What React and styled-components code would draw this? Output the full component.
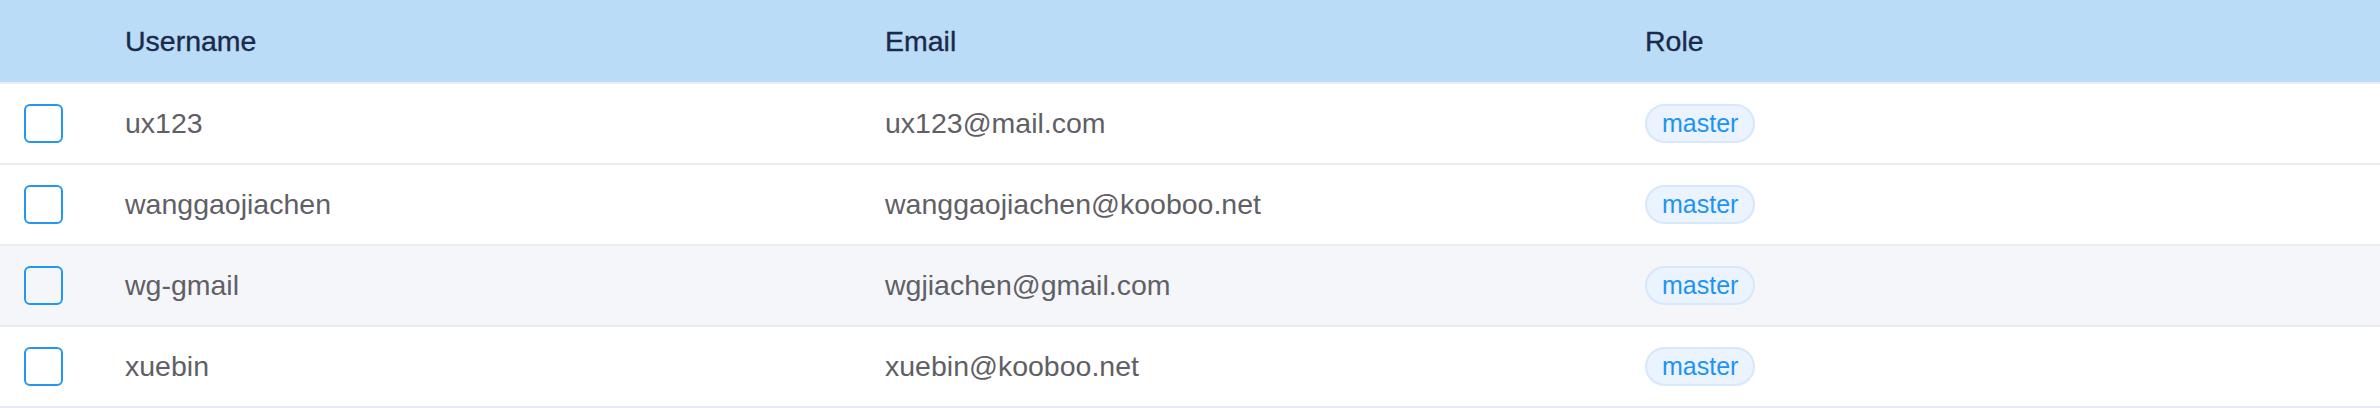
import React, { useState } from 'react';
import styled, { createGlobalStyle } from 'styled-components';

const users = [
  { name: 'ux123', email: 'ux123@mail.com', role: 'master' },
  { name: 'wanggaojiachen', email: 'wanggaojiachen@kooboo.net', role: 'master' },
  { name: 'wg-gmail', email: 'wgjiachen@gmail.com', role: 'master' },
  { name: 'xuebin', email: 'xuebin@kooboo.net', role: 'master' },
];

const GlobalStyle = createGlobalStyle`
  body {
    margin: 0;
    background: #fff;
    font-family: "Liberation Sans", Arial, sans-serif;
  }
`;

const Table = styled.div`
  width: 100%;
`;

const Row = styled.div`
  display: grid;
  grid-template-columns: 101px 760px 760px 1fr;
  align-items: center;
  height: ${p => (p.$head ? '82px' : '79px')};
  border-bottom: 2px solid #e8ebf3;
  background: ${p => (p.$head ? '#badcf7' : p.$striped ? '#f5f6fa' : '#fff')};
  color: ${p => (p.$head ? '#1b2a4a' : '#5f6066')};
  font-size: 28.5px;
  -webkit-text-stroke: ${p => (p.$head ? '0.35px' : '0')};
`;

const Cell = styled.div`
  padding-left: 24px;
  white-space: nowrap;
`;

const Check = styled.span`
  display: block;
  width: 39px;
  height: 39px;
  box-sizing: border-box;
  border: 2px solid #2196f3;
  border-radius: 6px;
  background: ${p => (p.$on ? '#2196f3' : 'transparent')};
  cursor: pointer;
`;

const Tag = styled.span`
  display: inline-flex;
  align-items: center;
  height: 39px;
  box-sizing: border-box;
  padding: 0 15px;
  border: 2px solid #d6e8fc;
  border-radius: 20px;
  background: #eaf3fe;
  color: #1f93f3;
  font-size: 25px;
`;

export default function App() {
  const [checked, setChecked] = useState({});
  return (
    <>
      <GlobalStyle />
      <Table>
        <Row $head>
          <Cell />
          <Cell>Username</Cell>
          <Cell>Email</Cell>
          <Cell>Role</Cell>
        </Row>
        {users.map((u, i) => (
          <Row key={u.name} $striped={i === 2}>
            <Cell>
              <Check
                $on={checked[u.name]}
                onClick={() => setChecked({ ...checked, [u.name]: !checked[u.name] })}
              />
            </Cell>
            <Cell>{u.name}</Cell>
            <Cell>{u.email}</Cell>
            <Cell>
              <Tag>{u.role}</Tag>
            </Cell>
          </Row>
        ))}
      </Table>
    </>
  );
}
